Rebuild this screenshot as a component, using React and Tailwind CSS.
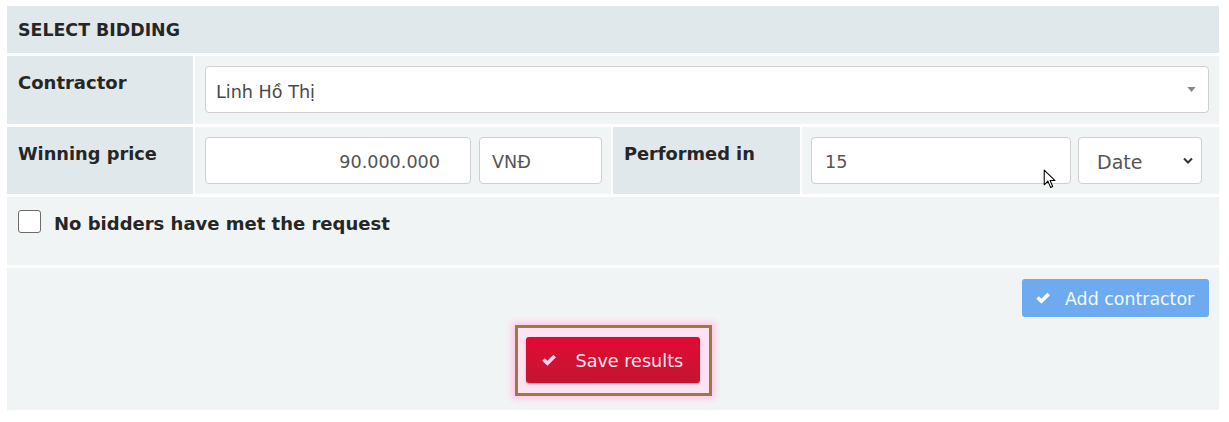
import React from "react";

function Check({ className }) {
  return (
    <svg viewBox="0 0 16 16" className={className} fill="currentColor">
      <path d="M2 8.6 L4.3 6.4 L6.6 8.6 L11.9 3.4 L14.2 5.6 L6.6 13 Z" />
    </svg>
  );
}

export default function App() {
  const font = { fontFamily: "'DejaVu Sans', 'Noto Sans', sans-serif" };
  return (
    <div className="bg-white w-[1229px] h-[422px] pt-[6px] pl-[7px]" style={font}>
      <div className="w-[1212px] flex flex-col gap-[3px]">
        {/* header */}
        <div className="h-[47px] bg-[#e1e8eb] flex items-center pl-[11px] pt-[2px]">
          <span className="text-[17.4px] font-bold text-[#262626]">SELECT BIDDING</span>
        </div>
        {/* contractor row */}
        <div className="h-[68px] flex gap-[2px]">
          <div className="w-[186px] bg-[#e1e8eb] pl-[11px] pt-[13px]">
            <span className="text-[18px] font-bold text-[#262626]">Contractor</span>
          </div>
          <div className="flex-1 bg-[#f1f4f5] p-[10px]">
            <div className="h-[47px] bg-white border border-[#cfcfcf] rounded-[4px] flex items-center pl-[10px] pr-[12px]">
              <span className="text-[17.6px] text-[#4a4a4a] flex-1 pt-[5px]">Linh Hồ Thị</span>
              <svg viewBox="0 0 10 6" className="w-[9px] h-[5px]"><path d="M0 0 L10 0 L5 6 Z" fill="#888" /></svg>
            </div>
          </div>
        </div>
        {/* price row */}
        <div className="h-[67px] flex gap-[2px]">
          <div className="w-[186px] bg-[#e1e8eb] pl-[11px] pt-[14px]">
            <span className="text-[17.8px] font-bold text-[#262626]">Winning price</span>
          </div>
          <div className="w-[416px] bg-[#f1f4f5] pl-[10px] pt-[10px] flex gap-[8px]">
            <div className="w-[266px] h-[47px] bg-white border border-[#cfcfcf] rounded-[4px] flex items-center justify-end pr-[30px]">
              <span className="text-[17.6px] text-[#555] pt-[4px]">90.000.000</span>
            </div>
            <div className="w-[123px] h-[47px] bg-white border border-[#cfcfcf] rounded-[4px] flex items-center pl-[12px]">
              <span className="text-[17.6px] text-[#555] pt-[4px]">VNĐ</span>
            </div>
          </div>
          <div className="w-[187px] bg-[#e1e8eb] pl-[11px] pt-[14px]">
            <span className="text-[17.8px] font-bold text-[#262626]">Performed in</span>
          </div>
          <div className="flex-1 bg-[#f1f4f5] pl-[9px] pt-[10px] flex gap-[7px]">
            <div className="relative w-[260px] h-[47px] bg-white border border-[#cfcfcf] rounded-[4px] flex items-center pl-[13px]">
              <span className="text-[17.6px] text-[#555] pt-[4px]">15</span>
              <svg viewBox="0 0 12 19" className="absolute left-[231px] top-[31px] w-[13px] h-[20px]">
                <path d="M1 1 L1 15 L4.5 11.5 L7 17.5 L9 16.6 L6.6 11 L11.3 11 Z" fill="white" stroke="black" strokeWidth="1" strokeLinejoin="round" />
              </svg>
            </div>
            <div className="w-[124px] h-[47px] bg-white border border-[#cfcfcf] rounded-[4px] flex items-center pl-[18px] pr-[8px]">
              <span className="text-[19px] text-[#555] flex-1 pt-[4px]">Date</span>
              <svg viewBox="0 0 10 6" className="w-[10px] h-[7px]"><path d="M1 1 L5 5 L9 1" fill="none" stroke="#333" strokeWidth="2" /></svg>
            </div>
          </div>
        </div>
        {/* checkbox row */}
        <div className="h-[68px] bg-[#f1f4f5] flex items-start pl-[11px] pt-[13px] gap-[13px]">
          <div className="w-[23px] h-[23px] bg-white border-[1.5px] border-[#6b6b6b] rounded-[3px]" />
          <span className="text-[18px] font-bold text-[#262626] leading-[23px] pt-[2px]">No bidders have met the request</span>
        </div>
        {/* actions row */}
        <div className="h-[142px] bg-[#f1f4f5] flex flex-col items-center relative">
          <div className="self-end pr-[10px] pt-[11px]">
            <div className="w-[187px] h-[38px] bg-[#6eaaf0] rounded-[3px] flex items-center pl-[12px] gap-[13px] text-white">
              <Check className="w-[18px] h-[18px]" />
              <span className="text-[17.4px] text-[#f0fbff] pt-[2px]">Add contractor</span>
            </div>
          </div>
          <div className="mt-[8px] p-[8px] pt-[9px] pb-[10px] pr-[9px] border-[3px] border-[#9c7a48] shadow-[0_0_6px_3px_#ffc7e6] bg-[#fde3f1]">
            <div className="w-[174px] h-[46px] bg-gradient-to-b from-[#e10933] to-[#c41532] rounded-[3px] flex items-center pl-[14px] gap-[18px] shadow-[0_1px_2px_rgba(0,0,0,0.3)]">
              <Check className="w-[18px] h-[18px] text-[#ffd2ea]" />
              <span className="text-[17.6px] text-[#ffe2f0] pt-[2px]">Save results</span>
            </div>
          </div>
        </div>
      </div>
    </div>
  );
}
